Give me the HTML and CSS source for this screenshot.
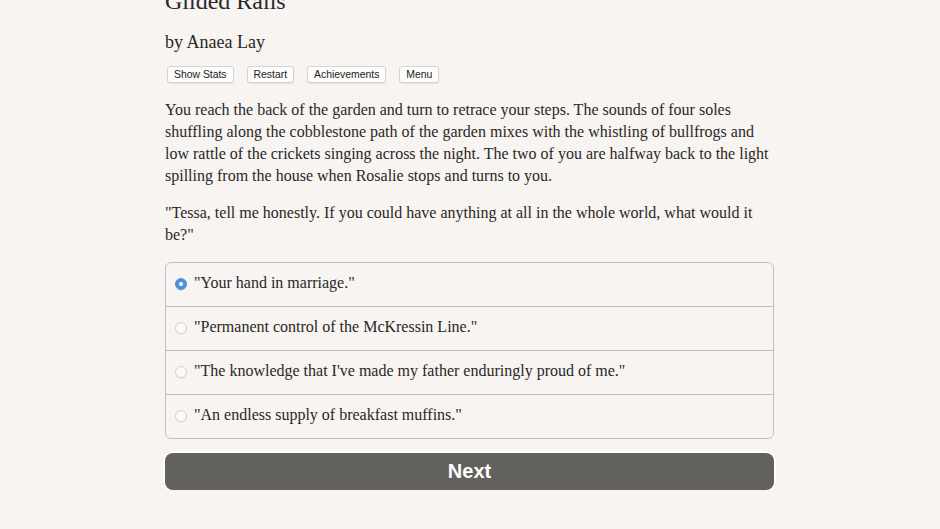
FILE: index.html
```html
<!DOCTYPE html>
<html>
<head>
<meta charset="utf-8">
<link rel="stylesheet" href="styles.css">
</head>
<body>
<div class="page">
  <h1 class="title">Gilded Rails</h1>
  <h2 class="author">by Anaea Lay</h2>
  <div class="toolbar">
    <button class="tbtn">Show Stats</button>
    <button class="tbtn">Restart</button>
    <button class="tbtn">Achievements</button>
    <button class="tbtn">Menu</button>
  </div>
  <p class="para">You reach the back of the garden and turn to retrace your steps. The sounds of four soles shuffling along the cobblestone path of the garden mixes with the whistling of bullfrogs and low rattle of the crickets singing across the night. The two of you are halfway back to the light spilling from the house when Rosalie stops and turns to you.</p>
  <p class="para">"Tessa, tell me honestly. If you could have anything at all in the whole world, what would it be?"</p>
  <div class="choices">
    <label class="choice"><span class="radio checked"></span><span>"Your hand in marriage."</span></label>
    <label class="choice"><span class="radio"></span><span>"Permanent control of the McKressin Line."</span></label>
    <label class="choice"><span class="radio"></span><span>"The knowledge that I've made my father enduringly proud of me."</span></label>
    <label class="choice"><span class="radio"></span><span>"An endless supply of breakfast muffins."</span></label>
  </div>
  <button class="next">Next</button>
</div>
</body>
</html>
```
FILE: styles.css
```css
html, body {
  margin: 0;
  padding: 0;
  background: #f7f4f1;
}
body {
  font-family: "Liberation Serif", "Times New Roman", serif;
  color: #2a2826;
  overflow: hidden;
}
.page {
  width: 609px;
  margin: 0 0 0 165px;
  display: flex;
  flex-direction: column;
}
.title {
  margin: -14px 0 0;
  font-size: 24px;
  font-weight: normal;
  line-height: 30px;
}
.author {
  margin: 15px 0 0;
  font-size: 18px;
  font-weight: normal;
  line-height: 22px;
}
.toolbar {
  display: flex;
  gap: 13px;
  margin: 13px 0 0 2px;
}
.tbtn {
  font-family: "Liberation Sans", Arial, sans-serif;
  font-size: 10.4px;
  color: #222;
  background: #fdfdfc;
  border: 1px solid #d6d3d0;
  border-radius: 3px;
  padding: 2px 6px;
  height: 17px;
  line-height: 11px;
  box-shadow: 0 1px 1px rgba(0,0,0,0.08);
}
.para {
  margin: 16px 0 0;
  font-size: 16px;
  line-height: 22px;
}
.para + .para {
  margin-top: 15px;
}
.choices {
  margin-top: 16px;
  border: 1px solid #c3c0bd;
  border-radius: 6px;
  display: flex;
  flex-direction: column;
}
.choice {
  display: flex;
  align-items: center;
  gap: 7px;
  height: 43px;
  box-sizing: border-box;
  padding: 0 0 3px 9px;
  font-size: 16px;
  border-top: 1px solid #c3c0bd;
}
.choice:first-child {
  border-top: none;
  height: 43px;
}
.choice + .choice {
  height: 44px;
}
.radio {
  width: 12px;
  height: 12px;
  margin-top: 2px;
  border-radius: 50%;
  background: #fbfbfa;
  border: 1px solid #d4d1ce;
  box-sizing: border-box;
  flex: none;
  box-shadow: 0 1px 1px rgba(0,0,0,0.06);
}
.radio.checked {
  background: #4d90e0;
  border-color: #4d90e0;
  position: relative;
}
.radio.checked::after {
  content: "";
  position: absolute;
  left: 3px;
  top: 3px;
  width: 4px;
  height: 4px;
  border-radius: 50%;
  background: #fff;
}
.next {
  margin-top: 14px;
  height: 37px;
  border: none;
  border-radius: 8px;
  background: #63615e;
  color: #fff;
  font-family: "Liberation Sans", Arial, sans-serif;
  font-weight: bold;
  font-size: 20px;
  box-shadow: 0 0 0 2px #fff;
}
```
